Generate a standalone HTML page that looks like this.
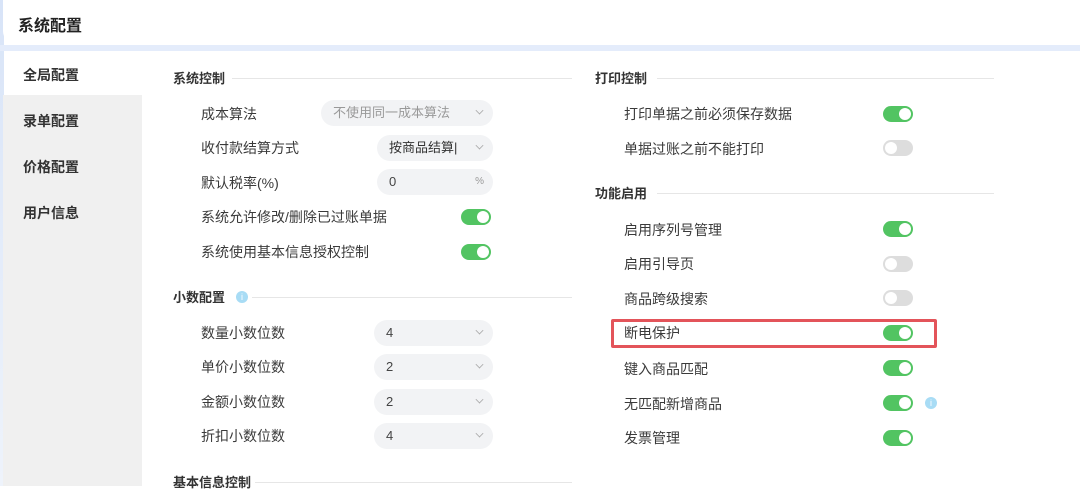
<!DOCTYPE html>
<html><head><meta charset="utf-8"><style>
*{margin:0;padding:0;box-sizing:border-box}
body{width:1080px;height:486px;overflow:hidden;background:#fff;font-family:"Liberation Sans","Noto Sans CJK SC",sans-serif;color:#333;position:relative}
.abs{position:absolute}
.hdr{left:3px;top:0;width:1077px;height:45px;background:#fff;border-radius:0 0 0 14px}
.strip{left:0;top:45px;width:1080px;height:6px;background:#e4ecfb}
.edge{left:0;top:0;width:4px;height:486px;background:linear-gradient(#d8e4f8,#eef3fb)}
.side{left:3px;top:95px;width:139px;height:391px;background:#f0f0f0}
.nav{left:23px;font-size:14px;font-weight:bold;color:#333}
.sec{font-size:13px;font-weight:bold;color:#333;line-height:16px}
.line{height:1px;background:#e6e6e6}
.lab{font-size:14px;color:#3a3a3a;line-height:18px}
.sel{height:26px;background:#f2f3f5;border-radius:13px;font-size:13px;line-height:26px;padding-left:12px;color:#444}
.sel .ar{position:absolute;right:10px;top:7px;width:7px;height:7px;border-right:1px solid #aaa;border-bottom:1px solid #aaa;transform:rotate(45deg) scale(.8)}
.tg{width:30px;height:16px;border-radius:8px;background:#52c462}
.tg::after{content:"";position:absolute;right:2px;top:2px;width:12px;height:12px;border-radius:6px;background:#fff}
.tg.off{background:#ddd}
.tg.off::after{left:2px;right:auto}
.info{width:12px;height:12px;border-radius:6px;background:#a8dcf5;color:#fff;font-size:9px;text-align:center;line-height:12px}
</style></head><body>
<div class="abs edge"></div>
<div class="abs hdr"></div>
<div class="abs" style="left:18px;top:12px;font-size:16px;font-weight:bold;color:#222">系统配置</div>
<div class="abs strip"></div>
<div class="abs side"></div>
<div class="abs nav" style="top:65px">全局配置</div>
<div class="abs nav" style="top:111px">录单配置</div>
<div class="abs nav" style="top:157px">价格配置</div>
<div class="abs nav" style="top:203px">用户信息</div>

<div class="abs sec" style="left:173px;top:71px">系统控制</div><div class="abs line" style="left:232px;top:78px;width:340px"></div>
<div class="abs lab" style="left:201px;top:105px">成本算法</div>
<div class="abs sel" style="left:321px;top:100px;width:172px;color:#999">不使用同一成本算法<span class="ar"></span></div>
<div class="abs lab" style="left:201px;top:139px">收付款结算方式</div>
<div class="abs sel" style="left:377px;top:135px;width:116px;color:#333">按商品结算|<span class="ar"></span></div>
<div class="abs lab" style="left:201px;top:174px">默认税率(%)</div>
<div class="abs sel" style="left:377px;top:169px;width:116px">0<span style="position:absolute;right:9px;top:0;font-size:10px;color:#999">%</span></div>
<div class="abs lab" style="left:201px;top:208px">系统允许修改/删除已过账单据</div>
<div class="abs tg" style="left:461px;top:209px"></div>
<div class="abs lab" style="left:201px;top:243px">系统使用基本信息授权控制</div>
<div class="abs tg" style="left:461px;top:244px"></div>

<div class="abs sec" style="left:173px;top:290px">小数配置</div><div class="abs info" style="left:236px;top:291px">i</div><div class="abs line" style="left:252px;top:297px;width:320px"></div>
<div class="abs lab" style="left:201px;top:324px">数量小数位数</div><div class="abs sel" style="left:374px;top:320px;width:119px">4<span class="ar"></span></div>
<div class="abs lab" style="left:201px;top:358px">单价小数位数</div><div class="abs sel" style="left:374px;top:354px;width:119px">2<span class="ar"></span></div>
<div class="abs lab" style="left:201px;top:393px">金额小数位数</div><div class="abs sel" style="left:374px;top:389px;width:119px">2<span class="ar"></span></div>
<div class="abs lab" style="left:201px;top:427px">折扣小数位数</div><div class="abs sel" style="left:374px;top:423px;width:119px">4<span class="ar"></span></div>
<div class="abs sec" style="left:173px;top:475px">基本信息控制</div><div class="abs line" style="left:255px;top:482px;width:317px"></div>

<div class="abs sec" style="left:595px;top:71px">打印控制</div><div class="abs line" style="left:657px;top:78px;width:337px"></div>
<div class="abs lab" style="left:624px;top:105px">打印单据之前必须保存数据</div><div class="abs tg" style="left:883px;top:106px"></div>
<div class="abs lab" style="left:624px;top:140px">单据过账之前不能打印</div><div class="abs tg off" style="left:883px;top:140px"></div>
<div class="abs sec" style="left:595px;top:186px">功能启用</div><div class="abs line" style="left:657px;top:193px;width:337px"></div>
<div class="abs lab" style="left:624px;top:221px">启用序列号管理</div><div class="abs tg" style="left:883px;top:221px"></div>
<div class="abs lab" style="left:624px;top:255px">启用引导页</div><div class="abs tg off" style="left:883px;top:256px"></div>
<div class="abs lab" style="left:624px;top:290px">商品跨级搜索</div><div class="abs tg off" style="left:883px;top:290px"></div>
<div class="abs" style="left:611px;top:319px;width:326px;height:29px;border:3px solid #e3545a;border-radius:2px"></div>
<div class="abs lab" style="left:624px;top:324px">断电保护</div><div class="abs tg" style="left:883px;top:325px"></div>
<div class="abs lab" style="left:624px;top:360px">键入商品匹配</div><div class="abs tg" style="left:883px;top:360px"></div>
<div class="abs lab" style="left:624px;top:395px">无匹配新增商品</div><div class="abs tg" style="left:883px;top:395px"></div><div class="abs info" style="left:925px;top:397px">i</div>
<div class="abs lab" style="left:624px;top:429px">发票管理</div><div class="abs tg" style="left:883px;top:430px"></div>
</body></html>
